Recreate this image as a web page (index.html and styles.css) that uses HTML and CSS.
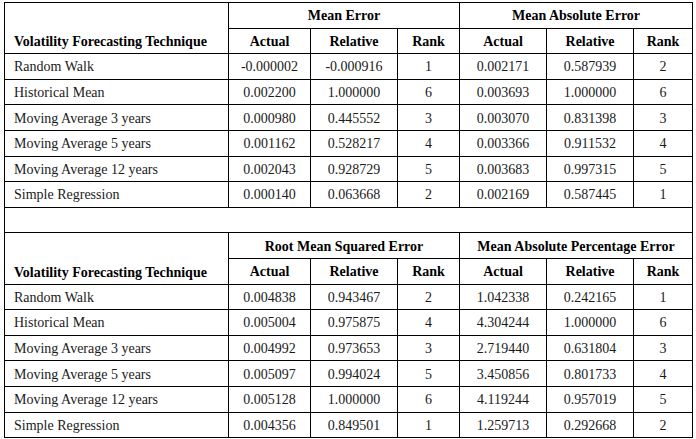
FILE: index.html
```html
<!DOCTYPE html>
<html>
<head>
<meta charset="utf-8">
<link rel="stylesheet" href="styles.css">
</head>
<body>
<table class="results">
  <colgroup>
    <col class="c-tech"><col class="c-a"><col class="c-r"><col class="c-k1"><col class="c-a2"><col class="c-r2"><col class="c-k2">
  </colgroup>
  <tr class="row">
    <th class="tech" rowspan="2">Volatility Forecasting Technique</th>
    <th colspan="3">Mean Error</th>
    <th colspan="3">Mean Absolute Error</th>
  </tr>
  <tr class="row">
    <th>Actual</th><th>Relative</th><th>Rank</th>
    <th>Actual</th><th>Relative</th><th>Rank</th>
  </tr>
  <tr class="row"><td class="name">Random Walk</td><td>-0.000002</td><td>-0.000916</td><td>1</td><td>0.002171</td><td>0.587939</td><td>2</td></tr>
  <tr class="row"><td class="name">Historical Mean</td><td>0.002200</td><td>1.000000</td><td>6</td><td>0.003693</td><td>1.000000</td><td>6</td></tr>
  <tr class="row"><td class="name">Moving Average 3 years</td><td>0.000980</td><td>0.445552</td><td>3</td><td>0.003070</td><td>0.831398</td><td>3</td></tr>
  <tr class="row"><td class="name">Moving Average 5 years</td><td>0.001162</td><td>0.528217</td><td>4</td><td>0.003366</td><td>0.911532</td><td>4</td></tr>
  <tr class="row"><td class="name">Moving Average 12 years</td><td>0.002043</td><td>0.928729</td><td>5</td><td>0.003683</td><td>0.997315</td><td>5</td></tr>
  <tr class="row"><td class="name">Simple Regression</td><td>0.000140</td><td>0.063668</td><td>2</td><td>0.002169</td><td>0.587445</td><td>1</td></tr>
  <tr class="row"><td class="blank" colspan="7"></td></tr>
  <tr class="row">
    <th class="tech" rowspan="2">Volatility Forecasting Technique</th>
    <th colspan="3">Root Mean Squared Error</th>
    <th colspan="3">Mean Absolute Percentage Error</th>
  </tr>
  <tr class="row">
    <th>Actual</th><th>Relative</th><th>Rank</th>
    <th>Actual</th><th>Relative</th><th>Rank</th>
  </tr>
  <tr class="row"><td class="name">Random Walk</td><td>0.004838</td><td>0.943467</td><td>2</td><td>1.042338</td><td>0.242165</td><td>1</td></tr>
  <tr class="row"><td class="name">Historical Mean</td><td>0.005004</td><td>0.975875</td><td>4</td><td>4.304244</td><td>1.000000</td><td>6</td></tr>
  <tr class="row"><td class="name">Moving Average 3 years</td><td>0.004992</td><td>0.973653</td><td>3</td><td>2.719440</td><td>0.631804</td><td>3</td></tr>
  <tr class="row"><td class="name">Moving Average 5 years</td><td>0.005097</td><td>0.994024</td><td>5</td><td>3.450856</td><td>0.801733</td><td>4</td></tr>
  <tr class="row"><td class="name">Moving Average 12 years</td><td>0.005128</td><td>1.000000</td><td>6</td><td>4.119244</td><td>0.957019</td><td>5</td></tr>
  <tr class="row"><td class="name">Simple Regression</td><td>0.004356</td><td>0.849501</td><td>1</td><td>1.259713</td><td>0.292668</td><td>2</td></tr>
</table>
</body>
</html>
```

FILE: styles.css
```css
html, body {
  margin: 0;
  padding: 0;
  background: #ffffff;
}
body {
  padding: 2px 0 0 4px;
  font-family: "Liberation Serif", "Times New Roman", serif;
  font-size: 14px;
  color: #1a1a1a;
}
.results {
  border-collapse: collapse;
  table-layout: fixed;
  width: 689px;
}
.c-tech { width: 224px; }
.c-a { width: 82px; }
.c-r { width: 87px; }
.c-k1 { width: 62px; }
.c-a2 { width: 87px; }
.c-r2 { width: 87px; }
.c-k2 { width: 59px; }
.results th,
.results td {
  border: 1px solid #000;
  padding: 2px 4px 0;
  text-align: center;
  vertical-align: middle;
  line-height: 16px;
  white-space: nowrap;
}
.results .row {
  height: 25.6px;
}
.results th {
  font-weight: bold;
  color: #000;
}
.results th.tech {
  text-align: left;
  vertical-align: bottom;
  padding: 0 9px 3px;
}
.results td.name {
  text-align: left;
  padding-left: 9px;
}
```
